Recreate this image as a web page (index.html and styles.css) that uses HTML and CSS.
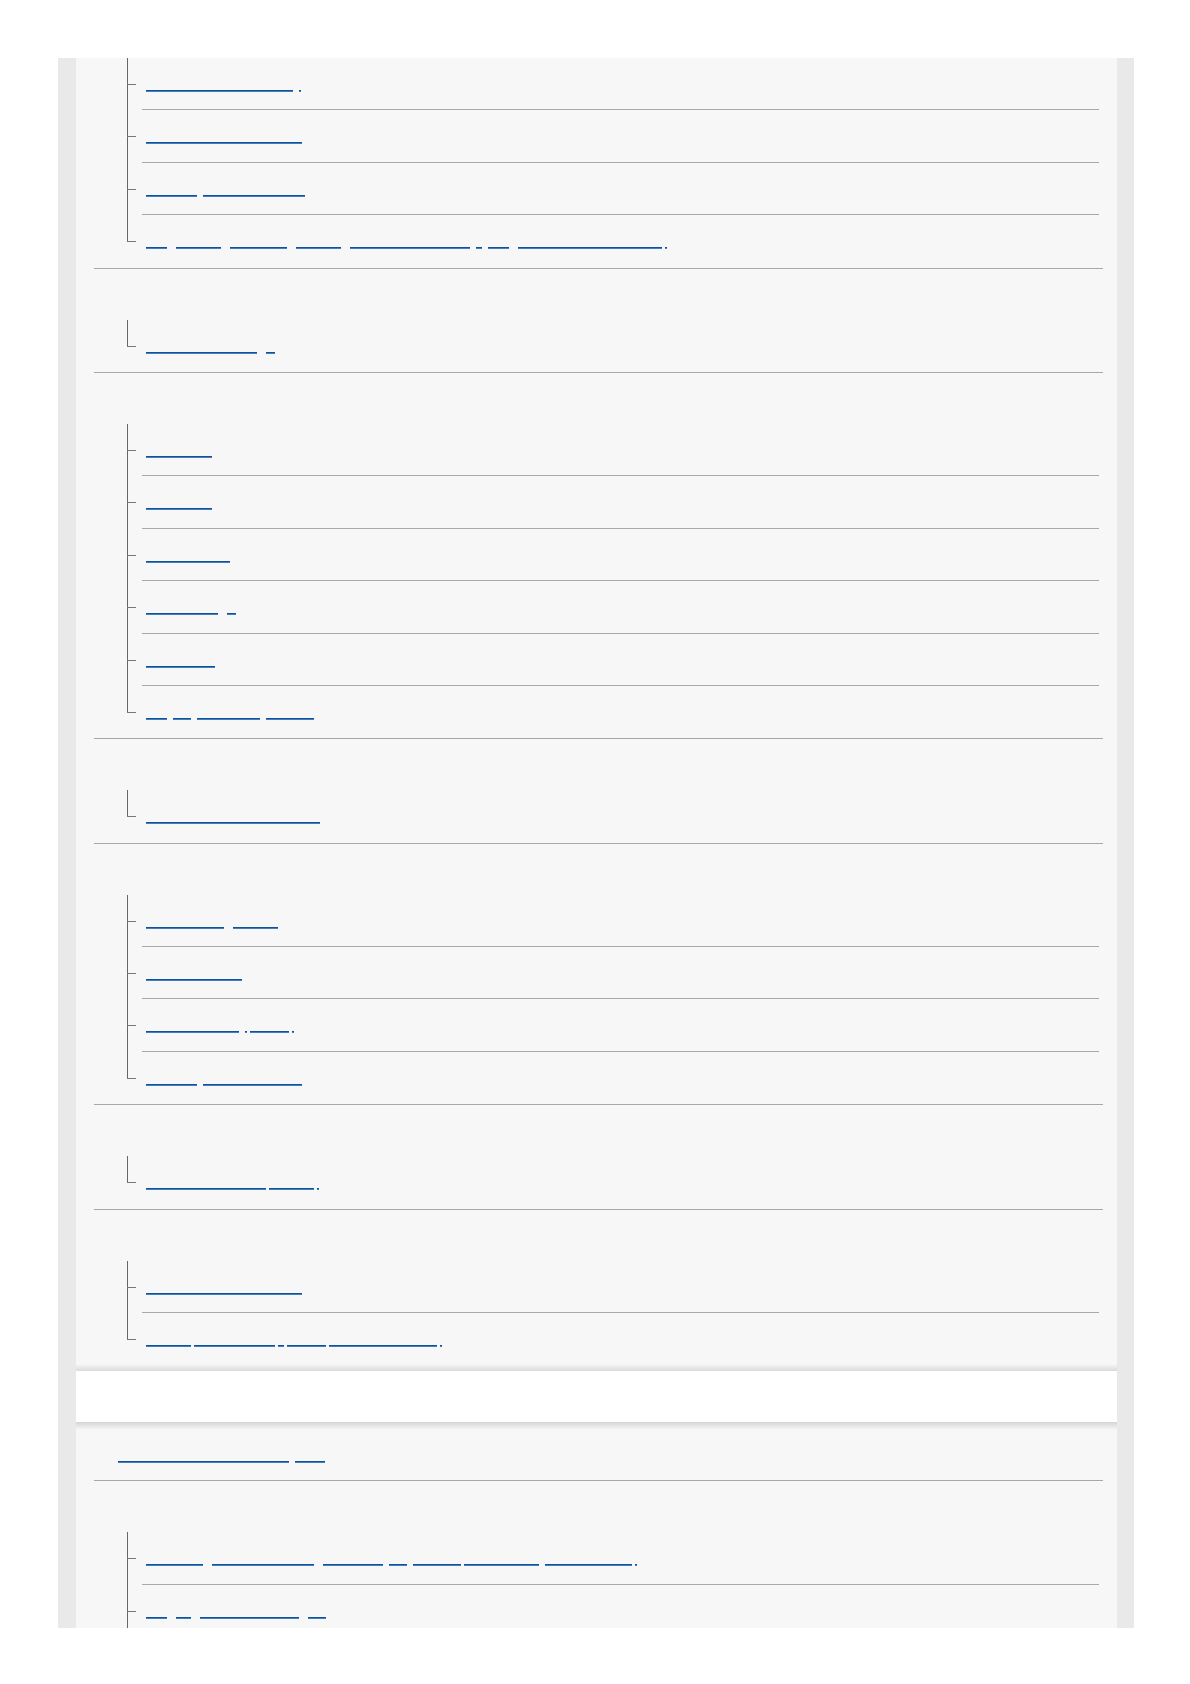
FILE: index.html
```html
<!DOCTYPE html>
<html lang="en">
<head>
<meta charset="utf-8">
<title>Help Guide – Contents</title>
<link rel="stylesheet" href="styles.css">
</head>
<body>
<div class="page">
  <div class="panel panel-first">
    <section class="group">
      <ul class="tree">
        <li><a class="lk" href="#"><span>Adjusting the brightness of the LCD monitor views</span>  <span class="pt">.</span></a></li>
        <li><a class="lk" href="#"><span>Setting the display mode for the viewfinder and LCDs</span></a></li>
        <li><a class="lk" href="#"><span>Finder frame rate</span>  <span>for still images and movie shoots.</span></a></li>
        <li><a class="lk" href="#"><span>Turning</span>   <span>off the monitor</span>   <span>while shooting with</span>   <span>the viewfinder,</span>   <span>and switching the displays automatically</span>  <span>to</span>  <span>another</span>   <span>screen when your eye is close to the viewfinders</span> <span class="pt">.</span></a></li>
      </ul>
    </section>
    <section class="group">
      <h3 class="ghead">Recording format</h3>
      <ul class="tree">
        <li><a class="lk" href="#"><span>Checking the recording format setting</span>   <span>(1)</span></a></li>
      </ul>
    </section>
    <section class="group">
      <h3 class="ghead">Selecting a shooting mode</h3>
      <ul class="tree">
        <li><a class="lk" href="#"><span>Intelligent Auto mode.</span></a></li>
        <li><a class="lk" href="#"><span>Program Auto exposure.</span></a></li>
        <li><a class="lk" href="#"><span>Aperture Priority mode (Av.)</span></a></li>
        <li><a class="lk" href="#"><span>Shutter Priority setting</span>   <span>(S)</span></a></li>
        <li><a class="lk" href="#"><span>Manual Exposure setting</span></a></li>
        <li><a class="lk" href="#"><span>Calling</span>  <span>camera</span>  <span>settings from memory.</span>  <span>(Memory recall).</span></a></li>
      </ul>
    </section>
    <section class="group">
      <h3 class="ghead">Touch operations</h3>
      <ul class="tree">
        <li><a class="lk" href="#"><span>Shooting with the touch operation functions of the monitor</span></a></li>
      </ul>
    </section>
    <section class="group">
      <h3 class="ghead">Focusing</h3>
      <ul class="tree">
        <li><a class="lk" href="#"><span>Selecting the focus method</span>   <span>(AF/MF select).</span></a></li>
        <li><a class="lk" href="#"><span>Selecting the focus area (Area).</span></a></li>
        <li><a class="lk" href="#"><span>Adjusting the focus using touch</span>  <span class="pt">.</span> <span>(Touch Focus)</span> <span class="pt">.</span></a></li>
        <li><a class="lk" href="#"><span>Face/Eye Priority</span>  <span>in AF for the subject detections.</span></a></li>
      </ul>
    </section>
    <section class="group">
      <h3 class="ghead">Picture Profile</h3>
      <ul class="tree">
        <li><a class="lk" href="#"><span>Setting the color space and gamma curves</span> <span>(Pict. Profile)</span> <span class="pt">.</span></a></li>
      </ul>
    </section>
    <section class="group">
      <h3 class="ghead">Remote shooting</h3>
      <ul class="tree">
        <li><a class="lk" href="#"><span>Using the Bluetooth remote commander with the camera</span></a></li>
        <li><a class="lk" href="#"><span>Connecting this</span> <span>camera to a smartphone with</span> <span>an</span> <span>app installed</span> <span>for remote control and file transfer</span> <span class="pt">.</span></a></li>
      </ul>
    </section>
  </div>

  <div class="band"></div>

  <div class="panel panel-second">
    <div class="phead"><a class="lk" href="#"><span>Names of parts and the list of icons shown on the monitor</span>  <span>(overview)</span></a></div>
    <section class="group">
      <h3 class="ghead">Before use</h3>
      <ul class="tree">
        <li><a class="lk" href="#"><span>Names of the camera</span>   <span>the body parts from front and side</span>   <span>views, with the lens</span>  <span>(side)</span>  <span>and the top view</span> <span>of the camera body, right</span>  <span>side and also the bottom side</span> <span class="pt">.</span></a></li>
        <li class="cont"><a class="lk" href="#"><span>List of</span>   <span>icons</span>   <span>displayed on the shooting screens</span>   <span>(list)</span></a></li>
      </ul>
    </section>
  </div>
</div>
</body>
</html>
```

FILE: styles.css
```css
* {
  box-sizing: border-box;
  margin: 0;
  padding: 0;
}

html,
body {
  background: #ffffff;
}

body {
  font-family: "Liberation Sans", Arial, sans-serif;
}

.page {
  margin: 58px 0 0 58px;
  width: 1076px;
  height: 1570px;
  overflow: hidden;
  background: #e9e9e9;
  padding: 0 17px 0 18px;
}

.panel {
  padding: 0 14px 0 18px;
  background-color: #f7f7f7;
}

.panel-first {
  padding-bottom: 6px;
  background-image: linear-gradient(to top, #dadada 0, #f7f7f7 7px);
}

.panel-second {
  background-image: linear-gradient(to bottom, #d5d5d5 0, #f7f7f7 8px);
}

.band {
  height: 51px;
  background: #ffffff;
}

.group {
  border-bottom: 1px solid #a7a7a7;
}

.group:last-child {
  border-bottom: 0;
}

.ghead {
  height: 51px;
  overflow: hidden;
  padding-top: 20px;
  font: 400 5px/5px "Liberation Mono", monospace;
  color: transparent;
}

.tree {
  list-style: none;
  padding: 0 4px 0 48px;
}

.tree li {
  position: relative;
  height: 52.4px;
  border-bottom: 1px solid #a9a9a9;
}

.tree li:last-child {
  border-bottom: 0;
}

.tree li::before {
  content: "";
  position: absolute;
  left: -15px;
  top: 0;
  bottom: -1px;
  width: 1px;
  background: #666666;
}

.tree li:last-child::before {
  bottom: auto;
  height: 27px;
}

.tree li.cont::before {
  height: auto;
  bottom: -1px;
}

.tree li::after {
  content: "";
  position: absolute;
  left: -15px;
  top: 26px;
  width: 9px;
  height: 1px;
  background: #787878;
}

.lk {
  display: block;
  padding: 27px 0 0 4px;
  font: 400 5px/5px "Liberation Mono", monospace;
  white-space: pre;
  color: transparent;
  text-decoration: none;
}

.lk span {
  display: inline-block;
  vertical-align: top;
  height: 6px;
  border-bottom: 1px solid #0c54a2;
  box-shadow: 0 1px 0 rgba(12, 84, 162, 0.75);
}

.lk .pt {
  font-size: 3px;
}

.phead {
  height: 58.8px;
  padding: 34px 0 0 24px;
  border-bottom: 1px solid #a7a7a7;
}

.phead .lk {
  padding: 0;
}
```
